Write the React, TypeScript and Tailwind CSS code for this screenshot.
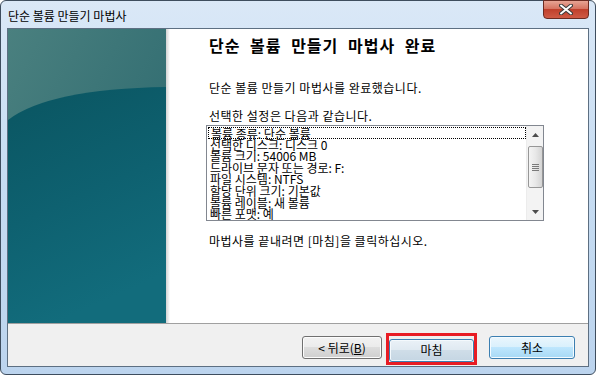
import React from "react";

const FONT = { fontFamily: '"Noto Sans CJK KR", "Noto Sans", sans-serif' };

const SUMMARY = [
  "볼륨 종류: 단순 볼륨",
  "선택한 디스크: 디스크 0",
  "볼륨 크기: 54006 MB",
  "드라이브 문자 또는 경로: F:",
  "파일 시스템: NTFS",
  "할당 단위 크기: 기본값",
  "볼륨 레이블: 새 볼륨",
  "빠른 포맷: 예",
];

function WizardArt() {
  return (
    <svg width="158" height="294" viewBox="0 0 158 294" className="block">
      <defs>
        <linearGradient id="top" x1="0" y1="0" x2="1" y2="1">
          <stop offset="0" stopColor="#4a807f" />
          <stop offset="1" stopColor="#27656c" />
        </linearGradient>
        <linearGradient id="body" x1="0" y1="0" x2="0.3" y2="1">
          <stop offset="0" stopColor="#0a5561" />
          <stop offset="0.55" stopColor="#0e6170" />
          <stop offset="1" stopColor="#126c7c" />
        </linearGradient>
      </defs>
      <rect width="158" height="294" fill="url(#top)" />
      <path d="M0 91 Q40 60 158 58 L158 294 L0 294 Z" fill="url(#body)" />
    </svg>
  );
}

function ScrollBar() {
  return (
    <div className="w-[17px] h-full bg-[#f3f3f3] border-l border-[#ececec] flex flex-col items-center">
      <div className="h-[17px] w-full flex items-center justify-center">
        <svg width="7" height="4" viewBox="0 0 7 4">
          <path d="M3.5 0 L7 4 L0 4 Z" fill="#4d4d4d" />
        </svg>
      </div>
      <div className="mt-[3px] w-[15px] h-[42px] rounded-[2px] border border-[#979797] bg-linear-to-r from-[#f4f4f4] via-[#e8e8e8] to-[#d4d4d4] flex flex-col items-center justify-center gap-[1px]">
        <div className="w-[7px] h-[1px] bg-[#7a7a7a]" />
        <div className="w-[7px] h-[1px] bg-[#7a7a7a]" />
        <div className="w-[7px] h-[1px] bg-[#7a7a7a]" />
        <div className="w-[7px] h-[1px] bg-[#7a7a7a]" />
      </div>
      <div className="flex-1" />
      <div className="h-[17px] w-full flex items-center justify-center">
        <svg width="7" height="4" viewBox="0 0 7 4">
          <path d="M0 0 L7 0 L3.5 4 Z" fill="#4d4d4d" />
        </svg>
      </div>
    </div>
  );
}

export default function App() {
  return (
    <div className="w-[596px] h-[375px] bg-white text-black" style={FONT}>
      <div className="w-[596px] h-[375px] rounded-[6px] border border-[#3e4d5e] bg-linear-to-b from-[#dae8f7] via-[#c6dcf2] to-[#bcd4ee] flex flex-col px-[6px] pb-[7px]">
        {/* Title bar */}
        <div className="h-[27px] flex items-start justify-between shrink-0">
          <div className="pl-[1px] pt-[7px] text-[12px] leading-[16px] text-black">
            단순 볼륨 만들기 마법사
          </div>
          <div className="-mt-[1px] w-[46px] h-[19px] rounded-b-[4px] border border-[#6b2b22] bg-[linear-gradient(#e7a494,#d67462_45%,#c0402c_50%,#cf5a45)] flex items-center justify-center">
            <svg width="14" height="11" viewBox="0 0 14 11">
              <path d="M2 1.5 L12 9.5 M12 1.5 L2 9.5" stroke="#3b3b3b" strokeWidth="4" strokeLinecap="round" />
              <path d="M2 1.5 L12 9.5 M12 1.5 L2 9.5" stroke="#ffffff" strokeWidth="2" strokeLinecap="round" />
            </svg>
          </div>
        </div>

        {/* Client area */}
        <div className="flex-1 border border-[#5d6f82] bg-white flex flex-col">
          <div className="h-[294px] flex shrink-0">
            <WizardArt />
            <div className="w-[4px] bg-linear-to-r from-[#d2d2d2] to-white" />
            <div className="flex-1 pl-[39px] flex flex-col">
              <h1 className="mt-[6px] text-[16px] leading-[20px] font-bold tracking-[1px] [word-spacing:5px]">
                단순 볼륨 만들기 마법사 완료
              </h1>
              <p className="mt-[25px] text-[12px] leading-[16px] tracking-[0.5px]">
                단순 볼륨 만들기 마법사를 완료했습니다.
              </p>
              <p className="mt-[12px] text-[12px] leading-[16px] tracking-[0.5px]">
                선택한 설정은 다음과 같습니다.
              </p>
              <div className="mt-[1px] -ml-[3px] w-[338px] h-[96px] border border-[#828790] flex">
                <div className="flex-1 pt-[1px] pl-[1px] overflow-hidden">
                  {SUMMARY.map((line, i) => (
                    <div
                      key={line}
                      className={`h-[11.6px] pl-[2px] text-[12px] leading-[11.6px] whitespace-nowrap ${
                        i === 0 ? "border border-dotted border-black pl-[1px] leading-[9.6px]" : ""
                      }`}
                    >
                      {line}
                    </div>
                  ))}
                </div>
                <ScrollBar />
              </div>
              <p className="mt-[12px] text-[12px] leading-[16px] tracking-[0.5px]">
                마법사를 끝내려면 [마침]을 클릭하십시오.
              </p>
            </div>
          </div>

          {/* Button strip */}
          <div className="flex-1 border-t border-[#a0a0a0] bg-[#f0f0f0] flex justify-end items-start pt-[12px] pr-[13px]">
            <button className="w-[80px] h-[23px] rounded-[3px] border border-[#707070] bg-[linear-gradient(#f2f2f2,#ebebeb_49%,#dddddd_50%,#cfcfcf)] shadow-[inset_0_0_0_1px_#fcfcfc] text-[12px] leading-[16px]">
              &lt; 뒤로(<span className="underline">B</span>)
            </button>
            <div className="relative ml-[7px]">
              <div className="absolute -inset-[3px] border-[3px] border-[#e81c24]" />
              <button className="w-[85px] h-[23px] rounded-[3px] border border-[#3c7fb1] bg-[linear-gradient(#eaf1f7,#dfe9f1_49%,#cfdde8_50%,#c5d6e3)] shadow-[inset_0_0_0_1px_#f4f9fd] text-[12px] leading-[16px]">
                마침
              </button>
            </div>
            <button className="ml-[15px] w-[86px] h-[23px] rounded-[3px] border border-[#3c7fb1] bg-[linear-gradient(#eaf6fd,#d9f0fc_49%,#bee6fd_50%,#a7d9f5)] shadow-[inset_0_0_0_1px_#f4fbff] text-[12px] leading-[16px]">
              취소
            </button>
          </div>
        </div>
      </div>
    </div>
  );
}
